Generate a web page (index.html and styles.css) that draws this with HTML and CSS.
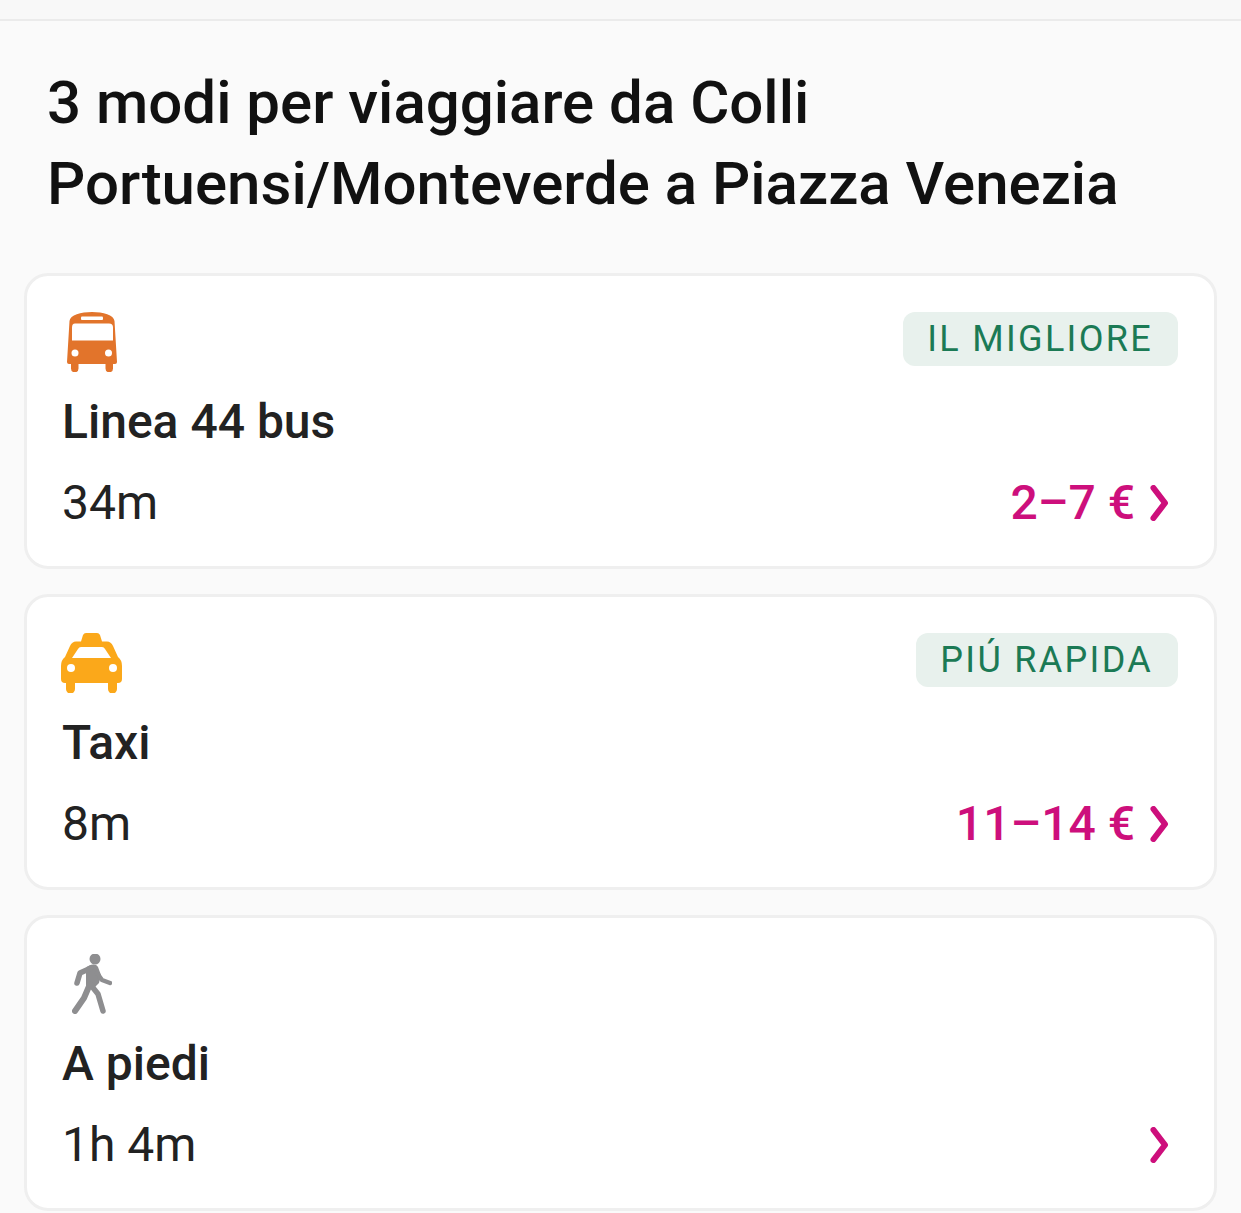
FILE: index.html
```html
<!DOCTYPE html>
<html lang="it">
<head>
  <meta charset="UTF-8" />
  <meta name="viewport" content="width=device-width, initial-scale=1.0" />
  <title>3 modi per viaggiare</title>
  <link rel="stylesheet" href="styles.css">
</head>
<body>
  <div class="top-strip"></div>
  <h1 class="title">3 modi per viaggiare da Colli Portuensi/Monteverde a Piazza Venezia</h1>

  <div class="cards">
    <div class="card">
      <div class="card-top">
        <svg class="icon icon-bus" viewBox="0 0 50 60">
          <path fill="#e2742b" d="M2.5 9C3 3 14 0 25 0s22 3 22.5 9L50 50q0 2-2 2h-2v4.5a3.5 3.5 0 0 1-7.5 0V52h-27v4.500a3.5 3.5 0 0 1-7.5 0V52H2q-2 0-2-2z"/>
          <path fill="#fff" d="M8 11.5h34q4 0 4 4v13H5v-13q0-4 3-4z"/>
          <rect fill="#fff" x="14" y="4.5" width="22" height="3.5" rx="1"/>
          <circle fill="#fff" cx="8" cy="41" r="3.5"/>
          <circle fill="#fff" cx="41.5" cy="41" r="3.5"/>
        </svg>
        <span class="badge">IL MIGLIORE</span>
      </div>
      <div class="name">Linea 44 bus</div>
      <div class="card-bottom">
        <span class="time">34m</span>
        <span class="price">2–7 €
          <svg class="chevron" viewBox="0 0 20 36"><path d="M4.5 3l11.5 15L4.5 33"/></svg>
        </span>
      </div>
    </div>

    <div class="card">
      <div class="card-top">
        <svg class="icon icon-taxi" viewBox="0 0 61 60">
          <path fill="#fba81a" d="M22 2q1-2 3-2h11q2 0 3 2l2 6.5h5q4 0 6 4.5l5 11q4 3 4 9v13q0 4-4 4h-1v6a4.5 4.5 0 0 1-9 0v-6H14v6a4.5 4.5 0 0 1-9 0v-6H4q-4 0-4-4V33q0-6 4-9l5-11q2-4.5 6-4.5h5z"/>
          <path fill="#fff" d="M20 14h21q2 0 3 2l6 9H11l6-9q1-2 3-2z"/>
          <circle fill="#fff" cx="10" cy="35" r="4"/>
          <circle fill="#fff" cx="52" cy="35" r="4"/>
        </svg>
        <span class="badge">PIÚ RAPIDA</span>
      </div>
      <div class="name">Taxi</div>
      <div class="card-bottom">
        <span class="time">8m</span>
        <span class="price">11–14 €
          <svg class="chevron" viewBox="0 0 20 36"><path d="M4.5 3l11.5 15L4.5 33"/></svg>
        </span>
      </div>
    </div>

    <div class="card">
      <div class="card-top">
        <svg class="icon icon-walk" viewBox="22 14 40 60">
          <circle cx="45" cy="19" r="5.5" fill="#8e8e90"/>
          <path fill="#8e8e90" d="M36 28c3-4 10-5 12-1l3 8-2 8-6 6-7-3z"/>
          <g fill="none" stroke="#8e8e90" stroke-linecap="round" stroke-linejoin="round">
            <path stroke-width="5.5" d="M41 28l-11 5-3 10"/>
            <path stroke-width="4.5" d="M47 33l5 7 8 3"/>
            <path stroke-width="6" d="M40 44l-6 14-9 13"/>
            <path stroke-width="5.5" d="M40 44l8 10 5 17"/>
          </g>
        </svg>
      </div>
      <div class="name">A piedi</div>
      <div class="card-bottom">
        <span class="time">1h 4m</span>
        <span class="price">
          <svg class="chevron" viewBox="0 0 20 36"><path d="M4.5 3l11.5 15L4.5 33"/></svg>
        </span>
      </div>
    </div>
  </div>
</body>
</html>
```

FILE: styles.css
```css
* {
  box-sizing: border-box;
}

html, body {
  height: 1213px;
  overflow: hidden;
}

body {
  margin: 0;
  background-color: #fafafa;
  color: #222;
  font-family: Roboto, "Noto Sans", sans-serif;
}

.top-strip {
  height: 21px;
  background-color: #f8f8f8;
  border-bottom: 2px solid #ebebeb;
}

.title {
  margin: 41px 47px 49px;
  font-size: 60px;
  font-weight: 500;
  line-height: 81px;
  color: #111;
}

.cards {
  display: flex;
  flex-direction: column;
  gap: 25px;
  margin: 0 24px;
}

.card {
  height: 296px;
  padding: 36px 36px 0 35px;
  background-color: #fff;
  border: 3px solid #efefef;
  border-radius: 24px;
}

.card-top {
  display: flex;
  justify-content: space-between;
  align-items: flex-start;
  height: 60px;
}

.icon {
  display: block;
  height: 60px;
}

.icon-bus {
  width: 50px;
  margin-left: 5px;
}

.icon-taxi {
  width: 61px;
  margin-left: -1px;
}

.icon-walk {
  width: 40px;
  margin-left: 10px;
}

.badge {
  padding: 0 25px 0 24px;
  height: 54px;
  line-height: 54px;
  background-color: #e8f1ed;
  border-radius: 12px;
  color: #1b7a55;
  font-size: 36px;
  letter-spacing: 2.3px;
}

.name {
  margin-top: 20px;
  font-size: 48px;
  font-weight: 500;
  line-height: 60px;
}

.card-bottom {
  display: flex;
  justify-content: space-between;
  align-items: center;
  height: 60px;
  margin-top: 20px;
}

.time {
  font-size: 48px;
}

.price {
  display: flex;
  align-items: center;
  gap: 14px;
  padding-right: 9px;
  color: #cd0f7c;
  font-size: 48px;
  font-weight: 500;
}

.chevron {
  width: 20px;
  height: 36px;
  margin-top: 2px;
  fill: none;
  stroke: #cd0f7c;
  stroke-width: 6;
  stroke-linecap: round;
  stroke-linejoin: round;
}
```
